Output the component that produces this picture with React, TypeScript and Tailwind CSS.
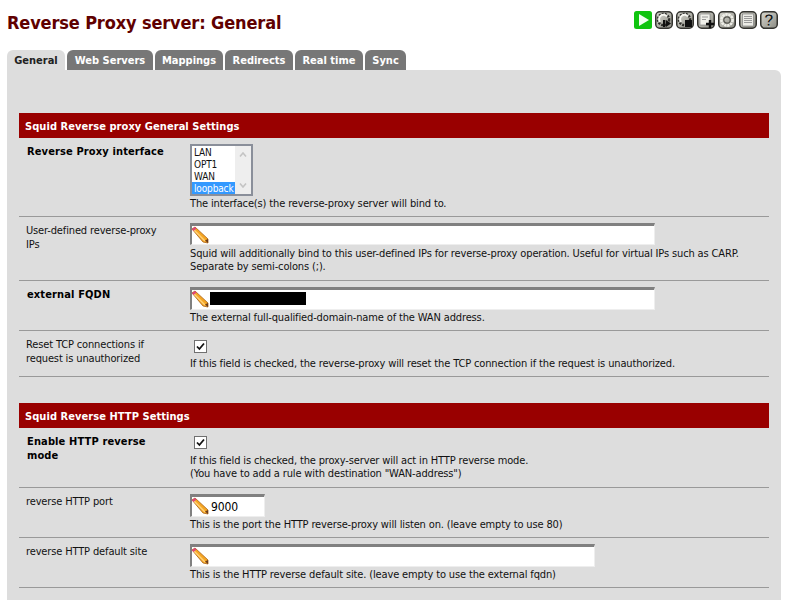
import React from "react";

const font = { fontFamily: '"DejaVu Sans Condensed", "DejaVu Sans", sans-serif', fontStretch: "condensed" };

function Pencil({ className = "" }: { className?: string }) {
  return (
    <svg width="18" height="18" viewBox="0 0 18 18" className={className}>
      <path d="M1 3 L4 1 L17 13 L17 17 L12 16 Z" fill="#f5a623" stroke="#a8621a" strokeWidth="0.8" />
      <path d="M3 4 L14 15" stroke="#ffd27a" strokeWidth="1.4" />
      <path d="M1 3 L4 1 L5.5 2.5 L2.5 5 Z" fill="#e0457b" />
      <path d="M14 14.5 L17 13 L17 17 Z" fill="#6b3a1a" />
    </svg>
  );
}

function Icon({ children }: { children: React.ReactNode }) {
  return (
    <svg width="18" height="18" viewBox="0 0 18 18">
      <defs>
        <linearGradient id="ig" x1="0" y1="0" x2="1" y2="1">
          <stop offset="0" stopColor="#d8d8d0" />
          <stop offset="1" stopColor="#8a8a82" />
        </linearGradient>
      </defs>
      <rect x="0.75" y="0.75" width="16.5" height="16.5" rx="4" fill="url(#ig)" stroke="#33332f" strokeWidth="1.5" />
      {children}
    </svg>
  );
}

function ArcGear() {
  return (
    <>
      <circle cx="8.5" cy="8.5" r="5.6" fill="none" stroke="#2e2e2a" strokeWidth="2.4" strokeDasharray="2 1" />
      <path d="M5 11 A4.4 4.4 0 1 1 12 5.5" fill="none" stroke="#f6f6f0" strokeWidth="2" />
    </>
  );
}

function Icons() {
  return (
    <div className="flex gap-[3px]">
      <svg width="18" height="18" viewBox="0 0 18 18">
        <rect width="18" height="18" rx="2.5" fill="#0fc40f" />
        <path d="M5 3 L15 9 L5 15 Z" fill="#f2fff2" />
      </svg>
      <Icon>
        <ArcGear />
        <rect x="8" y="9" width="2.4" height="7" fill="#111" />
        <path d="M11 9 L16 12.5 L11 16 Z" fill="#111" />
      </Icon>
      <Icon>
        <ArcGear />
        <rect x="9" y="9" width="7" height="7" fill="#111" />
      </Icon>
      <Icon>
        <rect x="3" y="3" width="10" height="11" fill="#f0f0ea" stroke="#777" strokeWidth="0.6" />
        <path d="M5 6 H11 M5 8.5 H9" stroke="#999" />
        <path d="M13 9 V17 M9 13 H17" stroke="#111" strokeWidth="2.4" />
      </Icon>
      <Icon>
        <circle cx="9" cy="9" r="5.6" fill="none" stroke="#efefe8" strokeWidth="2.6" strokeDasharray="2.4 .6" />
        <circle cx="9" cy="9" r="3.2" fill="none" stroke="#55554f" strokeWidth="1.2" />
      </Icon>
      <Icon>
        <rect x="3.5" y="3" width="11" height="12" fill="#ecece6" stroke="#777" strokeWidth="0.6" />
        <path d="M5 5.5 H13 M5 7.5 H13 M5 9.5 H13 M5 11.5 H13" stroke="#999" />
      </Icon>
      <Icon>
        <text x="9" y="15" textAnchor="middle" fontSize="16" fontWeight="700" fill="#111" stroke="#f4f4f0" strokeWidth="0.3" fontFamily="Liberation Sans, sans-serif">?</text>
      </Icon>
    </div>
  );
}

function Tab({ label, active, w }: { label: string; active?: boolean; w: string }) {
  return (
    <div
      className={`${w} h-5 rounded-t-[6px] text-center text-[11px] leading-[21px] font-bold ${
        active ? "bg-[#dddddd] text-[#222222]" : "bg-[#777777] text-white"
      }`}
    >
      {label}
    </div>
  );
}

function TextField({ w, h, value, redact }: { w: string; h: string; value?: string; redact?: boolean }) {
  return (
    <div className={`relative ${w} ${h}`}>
      <input
        readOnly
        value={value ?? ""}
        className="block h-full w-full border-t-[3px] border-r border-b border-l-[2px] border-t-[#808080] border-r-[#eeeeee] border-b-[#eeeeee] border-l-[#808080] bg-white pl-[19px] text-[12px] text-black outline-none"
        style={font}
      />
      <Pencil className="absolute top-[3px] left-[1px]" />
      {redact && <div className="absolute top-[5px] left-[20px] h-[13px] w-[96px] bg-black" />}
    </div>
  );
}

function Check({ mt }: { mt: string }) {
  return (
    <div className={`ml-1 flex h-[13px] w-[13px] items-center justify-center border border-[#707070] bg-white ${mt}`}>
      <svg width="9" height="9" viewBox="0 0 9 9">
        <path d="M1 4.5 L3.4 7 L8 1.5" fill="none" stroke="#111" strokeWidth="1.8" />
      </svg>
    </div>
  );
}

function Row({
  label,
  bold,
  h,
  children,
}: {
  label: string;
  bold?: boolean;
  h: string;
  children: React.ReactNode;
}) {
  return (
    <div className={`flex ${h} border-b border-[#999999]`}>
      <div
        className={`w-[171px] shrink-0 pt-[7px] pr-[22px] leading-[14px] ${
          bold ? "pl-2 font-bold tracking-[0.13px] text-black" : "pl-[7px] tracking-[-0.14px] text-[#111111]"
        }`}
      >
        {label}
      </div>
      <div className="flex-1 pt-[6px] leading-[13px] tracking-[-0.14px] text-[#111111]">{children}</div>
    </div>
  );
}

function Header({ title }: { title: string }) {
  return (
    <div className="h-[25px] bg-[#990000] pl-[6px] text-[11px] leading-[27px] font-bold tracking-[0.06px] text-white">{title}</div>
  );
}

function ListBox() {
  return (
    <div className="flex h-[52px] w-[63px] border-2 border-[#8a8f9a] bg-white text-[10px] leading-[13px] text-[#111111]">
      <div className="w-[43px] overflow-hidden">
        <div className="h-3 pl-[2px]">LAN</div>
        <div className="h-3 pl-[2px]">OPT1</div>
        <div className="h-3 pl-[2px]">WAN</div>
        <div className="h-3 bg-[#3399ff] pl-[2px] text-white">loopback</div>
      </div>
      <div className="flex flex-1 flex-col items-center justify-between bg-[#eeeeee] py-[6px]">
        <svg width="8" height="5" viewBox="0 0 8 5">
          <path d="M1 4.5 L4 1 L7 4.5" fill="none" stroke="#c4c4c4" strokeWidth="1.6" />
        </svg>
        <svg width="8" height="5" viewBox="0 0 8 5">
          <path d="M1 .5 L4 4 L7 .5" fill="none" stroke="#c4c4c4" strokeWidth="1.6" />
        </svg>
      </div>
    </div>
  );
}

export default function App() {
  return (
    <div className="h-[600px] w-[790px] overflow-hidden bg-white text-[11px]" style={font}>
      <div className="flex h-[50px] items-start justify-between pr-[12px] pl-[7px]">
        <h1 className="mt-[10px] text-[18px] leading-[25px] font-bold tracking-[-0.14px] text-[#600000]">Reverse Proxy server: General</h1>
        <div className="mt-[11px]">
          <Icons />
        </div>
      </div>
      <div className="flex gap-[2px] pl-[7px]">
        <Tab label="General" active w="w-[58px]" />
        <Tab label="Web Servers" w="w-[86px]" />
        <Tab label="Mappings" w="w-[68px]" />
        <Tab label="Redirects" w="w-[68px]" />
        <Tab label="Real time" w="w-[68px]" />
        <Tab label="Sync" w="w-[41px]" />
      </div>
      <div className="mr-[9px] ml-[7px] h-[530px] rounded-tr-[6px] bg-[#dddddd] px-[12px] pt-[43px]">
        <Header title="Squid Reverse proxy General Settings" />
        <Row label="Reverse Proxy interface" bold h="h-[79px]">
          <ListBox />
          <div className="mt-[1px]">The interface(s) the reverse-proxy server will bind to.</div>
        </Row>
        <Row label="User-defined reverse-proxy IPs" h="h-[64px]">
          <TextField w="w-[465px]" h="h-[22px]" />
          <div className="mt-[2px]">
            Squid will additionally bind to this user-defined IPs for reverse-proxy operation. Useful for virtual IPs such as CARP.
            <br />
            Separate by semi-colons (;).
          </div>
        </Row>
        <Row label="external FQDN" bold h="h-[50px]">
          <TextField w="w-[465px]" h="h-[23px]" redact />
          <div className="mt-[1px]">The external full-qualified-domain-name of the WAN address.</div>
        </Row>
        <Row label="Reset TCP connections if request is unauthorized" h="h-[46px]">
          <Check mt="mt-[3px]" />
          <div className="mt-[4px]">If this field is checked, the reverse-proxy will reset the TCP connection if the request is unauthorized.</div>
        </Row>
        <div className="h-[26px]" />
        <Header title="Squid Reverse HTTP Settings" />
        <Row label="Enable HTTP reverse mode" bold h="h-[60px]">
          <Check mt="mt-[2px]" />
          <div className="mt-[5px]">
            If this field is checked, the proxy-server will act in HTTP reverse mode.
            <br />
            (You have to add a rule with destination "WAN-address")
          </div>
        </Row>
        <Row label="reverse HTTP port" h="h-[50px]">
          <TextField w="w-[75px]" h="h-[23px]" value="9000" />
          <div className="mt-[1px]">This is the port the HTTP reverse-proxy will listen on. (leave empty to use 80)</div>
        </Row>
        <Row label="reverse HTTP default site" h="h-[50px]">
          <TextField w="w-[405px]" h="h-[23px]" />
          <div className="mt-[1px]">This is the HTTP reverse default site. (leave empty to use the external fqdn)</div>
        </Row>
      </div>
    </div>
  );
}
